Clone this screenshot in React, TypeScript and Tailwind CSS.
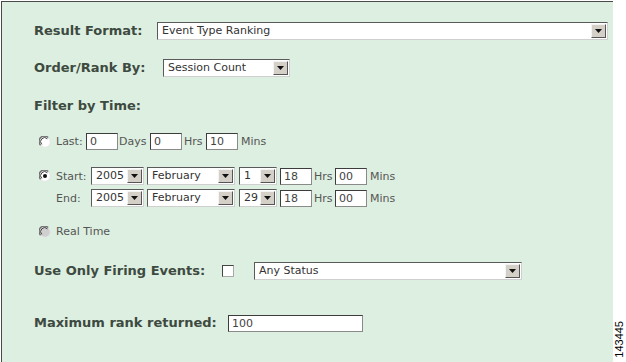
import React from "react";

function Arrow() {
    return (
        <svg width="7" height="4" viewBox="0 0 7 4">
            <path d="M0 0 H7 L3.5 4 Z" fill="#111" />
        </svg>
    );
}

function Select({ value, className }: { value: string; className: string }) {
    return (
        <div className={`flex h-[18px] bg-white border border-t-[#5a5a5a] border-l-[#5a5a5a] border-b-[#cfcfcf] border-r-[#cfcfcf] ${className}`}>
            <span className="flex-1 pl-[4px] text-[11px] leading-[16px] text-[#333] whitespace-nowrap overflow-hidden">
                {value}
            </span>
            <span className="w-[15px] my-[1px] mr-[1px] flex items-center justify-center bg-[#d4d0c8] border border-t-[#f4f4f4] border-l-[#f4f4f4] border-b-[#555] border-r-[#555]">
                <Arrow />
            </span>
        </div>
    );
}

function TextBox({ value, className }: { value: string; className: string }) {
    return (
        <div className={`h-[17px] bg-white border border-t-[#3c3c3c] border-l-[#3c3c3c] border-b-[#8a8a8a] border-r-[#8a8a8a] pl-[3px] text-[11px] leading-[15px] text-[#444] ${className}`}>
            {value}
        </div>
    );
}

function Radio({ checked, disabled }: { checked?: boolean; disabled?: boolean }) {
    return (
        <svg width="12" height="12" viewBox="0 0 12 12" className="shrink-0">
            <circle cx="6" cy="6" r="5.3" fill={disabled ? "#cfcfcf" : "#ffffff"} stroke="#e6e6e6" strokeWidth="1" />
            <path d="M1.6 9.2 A5 5 0 0 1 9.2 1.6" stroke="#6e6e6e" strokeWidth="1.4" fill="none" />
            <path d="M2.8 8.4 A3.8 3.8 0 0 1 8.4 2.8" stroke="#2e2e2e" strokeWidth="0.9" fill="none" />
            {checked && <circle cx="6" cy="6" r="2" fill="#111" />}
        </svg>
    );
}

const label = "text-[13px] leading-[18px] font-bold text-[#3d4a41]";
const opt = "text-[11px] leading-[17px] text-[#555]";

export default function App() {
    return (
        <div className="w-[626px] h-[362px] bg-white flex font-['DejaVu_Sans',sans-serif] overflow-hidden">
            <div className="mt-[1px] ml-[1px] w-[612px] h-[361px] border-l border-t border-[#4a4a4a] bg-[#ddefe0] flex flex-col pl-[32px]">
                {/* Result format */}
                <div className="flex items-center mt-[20px]">
                    <span className={`${label} w-[123px]`}>Result Format:</span>
                    <Select value="Event Type Ranking" className="w-[451px]" />
                </div>

                {/* order */}
                <div className="flex items-center mt-[19px]">
                    <span className={`${label} w-[129px]`}>Order/Rank By:</span>
                    <Select value="Session Count" className="w-[127px]" />
                </div>

                <div className={`${label} mt-[20px]`}>Filter by Time:</div>

                {/* last */}
                <div className="flex items-center mt-[18px] ml-[5px]">
                    <Radio />
                    <span className={`${opt} ml-[5px] w-[30px]`}>Last:</span>
                    <TextBox value="0" className="w-[32px]" />
                    <span className={`${opt} ml-[1px] w-[31px]`}>Days</span>
                    <TextBox value="0" className="w-[32px]" />
                    <span className={`${opt} ml-[2px] w-[22px]`}>Hrs</span>
                    <TextBox value="10" className="w-[32px]" />
                    <span className={`${opt} ml-[3px]`}>Mins</span>
                </div>

                {/* start / end */}
                <div className="flex flex-col gap-[4px] mt-[17px] ml-[5px]">
                    <div className="flex items-center">
                        <Radio checked />
                        <span className={`${opt} ml-[5px] w-[35px]`}>Start:</span>
                        <Select value="2005" className="w-[53px]" />
                        <Select value="February" className="w-[88px] ml-[3px]" />
                        <Select value="1" className="w-[38px] ml-[4px]" />
                        <TextBox value="18" className="w-[32px] ml-[3px]" />
                        <span className={`${opt} ml-[2px] w-[21px]`}>Hrs</span>
                        <TextBox value="00" className="w-[32px]" />
                        <span className={`${opt} ml-[3px]`}>Mins</span>
                    </div>
                    <div className="flex items-center">
                        <span className="w-[12px] shrink-0" />
                        <span className={`${opt} ml-[5px] w-[35px]`}>End:</span>
                        <Select value="2005" className="w-[53px]" />
                        <Select value="February" className="w-[88px] ml-[3px]" />
                        <Select value="29" className="w-[38px] ml-[4px]" />
                        <TextBox value="18" className="w-[32px] ml-[3px]" />
                        <span className={`${opt} ml-[2px] w-[21px]`}>Hrs</span>
                        <TextBox value="00" className="w-[32px]" />
                        <span className={`${opt} ml-[3px]`}>Mins</span>
                    </div>
                </div>

                {/* real time */}
                <div className="flex items-center mt-[16px] ml-[5px]">
                    <Radio disabled />
                    <span className={`${opt} ml-[5px]`}>Real Time</span>
                </div>

                {/* firing */}
                <div className="flex items-center mt-[22px]">
                    <span className={`${label} w-[188px]`}>Use Only Firing Events:</span>
                    <span className="w-[12px] h-[12px] bg-white border border-t-[#444] border-l-[#444] border-b-[#aaa] border-r-[#aaa]" />
                    <Select value="Any Status" className="w-[268px] ml-[20px]" />
                </div>

                {/* max rank */}
                <div className="flex items-center mt-[34px]">
                    <span className={`${label} w-[194px]`}>Maximum rank returned:</span>
                    <TextBox value="100" className="w-[135px]" />
                </div>
            </div>
            <div className="flex-1 flex flex-col justify-end items-center pb-[4px]">
                <span className="[writing-mode:vertical-rl] rotate-180 text-[11px] leading-[11px] text-black font-['Liberation_Sans',sans-serif]">
                    143445
                </span>
            </div>
        </div>
    );
}
